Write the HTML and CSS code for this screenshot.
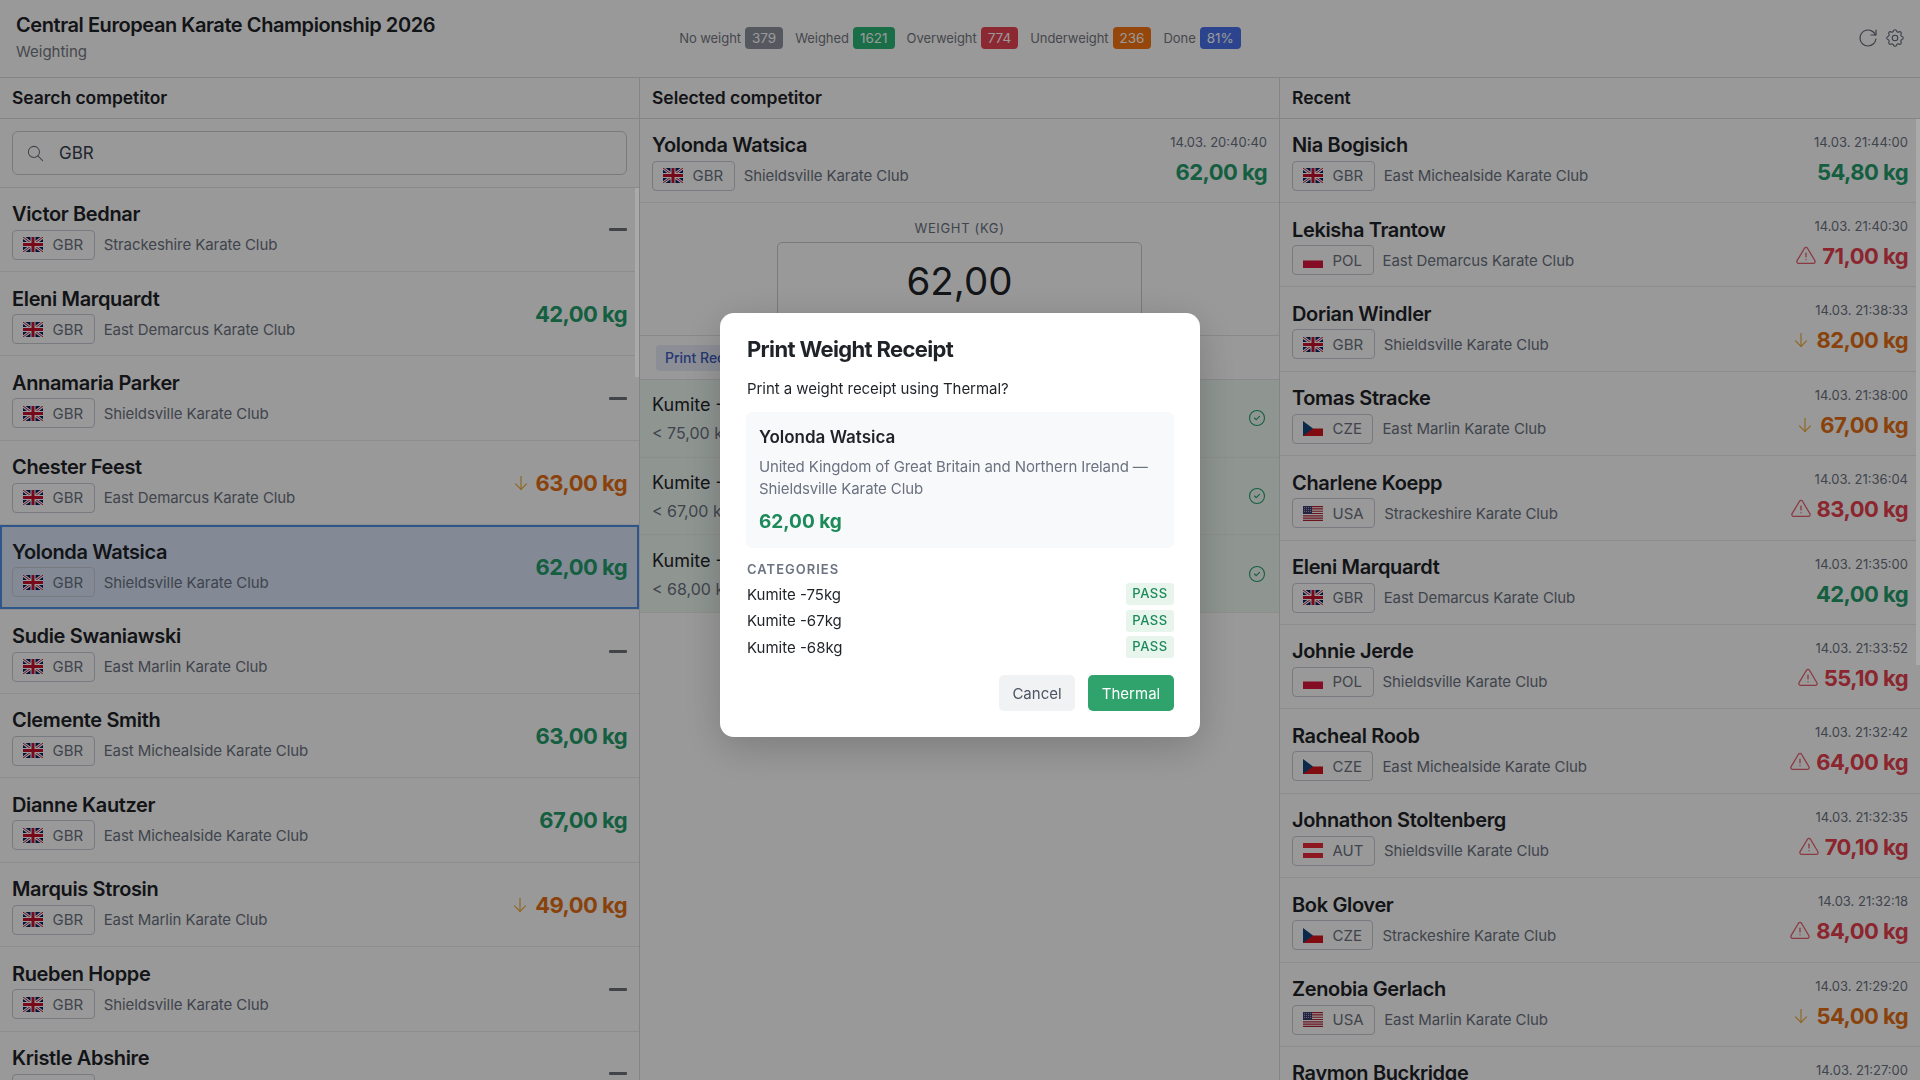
FILE: index.html
```html
<!DOCTYPE html>
<html lang="en">
<head>
<meta charset="utf-8">
<title>Weighting</title>
<link rel="stylesheet" href="styles.css">
</head>
<body>
<svg class="sprite" aria-hidden="true">
  <symbol id="gbr" viewBox="0 0 60 45" preserveAspectRatio="none">
    <rect width="60" height="45" fill="#012169"/>
    <path d="M0 0L60 45M60 0L0 45" stroke="#fff" stroke-width="9"/>
    <path d="M0 0L60 45M60 0L0 45" stroke="#c8102e" stroke-width="3"/>
    <path d="M30 0V45M0 22.500H60" stroke="#fff" stroke-width="15"/>
    <path d="M30 0V45M0 22.500H60" stroke="#c8102e" stroke-width="9"/>
  </symbol>
  <symbol id="pol" viewBox="0 0 20 15" preserveAspectRatio="none">
    <rect width="20" height="7.500" fill="#fff"/>
    <rect y="7.500" width="20" height="7.500" fill="#dc143c"/>
  </symbol>
  <symbol id="cze" viewBox="0 0 20 15" preserveAspectRatio="none">
    <rect width="20" height="7.500" fill="#fff"/>
    <rect y="7.500" width="20" height="7.500" fill="#d7141a"/>
    <path d="M0 0L10 7.500L0 15Z" fill="#11457e"/>
  </symbol>
  <symbol id="usa" viewBox="0 0 20 15" preserveAspectRatio="none">
    <rect width="20" height="15" fill="#fff"/>
    <path d="M0 .6H20M0 2.900H20M0 5.200H20M0 7.500H20M0 9.800H20M0 12.100H20M0 14.400H20" stroke="#b22234" stroke-width="1.150"/>
    <rect width="9" height="8" fill="#3c3b6e"/>
    <path d="M1 1.500H8M1 3.500H8M1 5.500H8" stroke="#cfd0e0" stroke-width=".7" stroke-dasharray="1 1"/>
  </symbol>
  <symbol id="aut" viewBox="0 0 20 15" preserveAspectRatio="none">
    <rect width="20" height="15" fill="#ed2939"/>
    <rect y="5" width="20" height="5" fill="#fff"/>
  </symbol>
  <symbol id="i-warn" viewBox="0 0 24 24"><path d="M12 9v4"/><path d="M10.363 3.591l-8.106 13.534a1.914 1.914 0 0 0 1.636 2.871h16.214a1.914 1.914 0 0 0 1.636 -2.87l-8.106 -13.536a1.914 1.914 0 0 0 -3.274 0z"/><path d="M12 16h.01"/></symbol>
  <symbol id="i-down" viewBox="0 0 24 24"><path d="M12 5v14"/><path d="M18 13l-6 6"/><path d="M6 13l6 6"/></symbol>
  <symbol id="i-check" viewBox="0 0 24 24"><path d="M12 3a9 9 0 1 0 0 18a9 9 0 0 0 0 -18"/><path d="M9 12l2 2l4 -4"/></symbol>
</svg>

<div class="app">
  <header class="topbar">
    <div class="brand">
      <div class="brand-title">Central European Karate Championship 2026</div>
      <div class="brand-sub">Weighting</div>
    </div>
    <div class="stats">
      <span class="stat">No weight <b class="pill pill-gray">379</b></span>
      <span class="stat">Weighed <b class="pill pill-green">1621</b></span>
      <span class="stat">Overweight <b class="pill pill-red">774</b></span>
      <span class="stat">Underweight <b class="pill pill-orange">236</b></span>
      <span class="stat">Done <b class="pill pill-blue">81%</b></span>
    </div>
    <div class="tools">
      <svg class="tool tool-reload" viewBox="0 0 24 24"><path d="M19.933 13.041a8 8 0 1 1 -9.925 -8.788c3.899 -1 7.935 1.007 9.425 4.747"/><path d="M20 4v5h-5"/></svg>
      <svg class="tool tool-gear" viewBox="0 0 24 24"><path d="M10.325 4.317c.426 -1.756 2.924 -1.756 3.35 0a1.724 1.724 0 0 0 2.573 1.066c1.543 -.94 3.31 .826 2.37 2.37a1.724 1.724 0 0 0 1.065 2.572c1.756 .426 1.756 2.924 0 3.35a1.724 1.724 0 0 0 -1.066 2.573c.94 1.543 -.826 3.31 -2.37 2.37a1.724 1.724 0 0 0 -2.572 1.065c-.426 1.756 -2.924 1.756 -3.35 0a1.724 1.724 0 0 0 -2.573 -1.066c-1.543 .94 -3.31 -.826 -2.37 -2.37a1.724 1.724 0 0 0 -1.065 -2.572c-1.756 -.426 -1.756 -2.924 0 -3.35a1.724 1.724 0 0 0 1.066 -2.573c-.94 -1.543 .826 -3.31 2.37 -2.37c1 .608 2.296 .07 2.572 -1.065z"/><path d="M9 12a3 3 0 1 0 6 0a3 3 0 0 0 -6 0"/></svg>
    </div>
  </header>

  <main class="columns">
    <section class="col">
      <h2 class="col-head">Search competitor</h2>
      <div class="search-wrap">
        <div class="search">
          <svg class="search-icon" viewBox="0 0 24 24"><path d="M3 10a7 7 0 1 0 14 0a7 7 0 1 0 -14 0"/><path d="M21 21l-6 -6"/></svg>
          <span class="search-value">GBR</span>
        </div>
      </div>
      <div class="list">
        <div class="thumb thumb-left"></div>
        <div class="row"><div class="who"><div class="name">Victor Bednar</div><div class="sub"><span class="tag"><svg class="flag"><use href="#gbr"/></svg>GBR</span><span class="club">Strackeshire Karate Club</span></div></div><div class="dash"></div></div>
        <div class="row"><div class="who"><div class="name">Eleni Marquardt</div><div class="sub"><span class="tag"><svg class="flag"><use href="#gbr"/></svg>GBR</span><span class="club">East Demarcus Karate Club</span></div></div><div class="kg ok">42,00 kg</div></div>
        <div class="row"><div class="who"><div class="name">Annamaria Parker</div><div class="sub"><span class="tag"><svg class="flag"><use href="#gbr"/></svg>GBR</span><span class="club">Shieldsville Karate Club</span></div></div><div class="dash"></div></div>
        <div class="row"><div class="who"><div class="name">Chester Feest</div><div class="sub"><span class="tag"><svg class="flag"><use href="#gbr"/></svg>GBR</span><span class="club">East Demarcus Karate Club</span></div></div><div class="kg under"><svg class="ico ico-down"><use href="#i-down"/></svg>63,00 kg</div></div>
        <div class="row row-selected"><div class="who"><div class="name">Yolonda Watsica</div><div class="sub"><span class="tag"><svg class="flag"><use href="#gbr"/></svg>GBR</span><span class="club">Shieldsville Karate Club</span></div></div><div class="kg ok">62,00 kg</div></div>
        <div class="row"><div class="who"><div class="name">Sudie Swaniawski</div><div class="sub"><span class="tag"><svg class="flag"><use href="#gbr"/></svg>GBR</span><span class="club">East Marlin Karate Club</span></div></div><div class="dash"></div></div>
        <div class="row"><div class="who"><div class="name">Clemente Smith</div><div class="sub"><span class="tag"><svg class="flag"><use href="#gbr"/></svg>GBR</span><span class="club">East Michealside Karate Club</span></div></div><div class="kg ok">63,00 kg</div></div>
        <div class="row"><div class="who"><div class="name">Dianne Kautzer</div><div class="sub"><span class="tag"><svg class="flag"><use href="#gbr"/></svg>GBR</span><span class="club">East Michealside Karate Club</span></div></div><div class="kg ok">67,00 kg</div></div>
        <div class="row"><div class="who"><div class="name">Marquis Strosin</div><div class="sub"><span class="tag"><svg class="flag"><use href="#gbr"/></svg>GBR</span><span class="club">East Marlin Karate Club</span></div></div><div class="kg under"><svg class="ico ico-down"><use href="#i-down"/></svg>49,00 kg</div></div>
        <div class="row"><div class="who"><div class="name">Rueben Hoppe</div><div class="sub"><span class="tag"><svg class="flag"><use href="#gbr"/></svg>GBR</span><span class="club">Shieldsville Karate Club</span></div></div><div class="dash"></div></div>
        <div class="row"><div class="who"><div class="name">Kristle Abshire</div><div class="sub"><span class="tag"><svg class="flag"><use href="#gbr"/></svg>GBR</span><span class="club">East Marlin Karate Club</span></div></div><div class="dash"></div></div>
      </div>
    </section>

    <section class="col">
      <h2 class="col-head">Selected competitor</h2>
      <div class="row"><div class="who"><div class="name">Yolonda Watsica</div><div class="sub"><span class="tag"><svg class="flag"><use href="#gbr"/></svg>GBR</span><span class="club">Shieldsville Karate Club</span></div></div><div class="meta"><div class="time">14.03. 20:40:40</div><div class="kg ok">62,00 kg</div></div></div>
      <div class="weigh">
        <div class="weigh-label">WEIGHT (KG)</div>
        <div class="weigh-box">62,00</div>
      </div>
      <div class="actions"><span class="print-btn">Print Receipt</span></div>
      <div class="cat"><div><div class="cat-name">Kumite -75kg</div><div class="cat-limit">&lt; 75,00 kg</div></div><svg class="ico-check"><use href="#i-check"/></svg></div>
      <div class="cat"><div><div class="cat-name">Kumite -67kg</div><div class="cat-limit">&lt; 67,00 kg</div></div><svg class="ico-check"><use href="#i-check"/></svg></div>
      <div class="cat"><div><div class="cat-name">Kumite -68kg</div><div class="cat-limit">&lt; 68,00 kg</div></div><svg class="ico-check"><use href="#i-check"/></svg></div>
    </section>

    <section class="col col-last">
      <h2 class="col-head">Recent</h2>
      <div class="list">
        <div class="thumb thumb-right"></div>
        <div class="row"><div class="who"><div class="name">Nia Bogisich</div><div class="sub"><span class="tag"><svg class="flag"><use href="#gbr"/></svg>GBR</span><span class="club">East Michealside Karate Club</span></div></div><div class="meta"><div class="time">14.03. 21:44:00</div><div class="kg ok">54,80 kg</div></div></div>
        <div class="row"><div class="who"><div class="name">Lekisha Trantow</div><div class="sub"><span class="tag"><svg class="flag"><use href="#pol"/></svg>POL</span><span class="club">East Demarcus Karate Club</span></div></div><div class="meta"><div class="time">14.03. 21:40:30</div><div class="kg over"><svg class="ico ico-warn"><use href="#i-warn"/></svg>71,00 kg</div></div></div>
        <div class="row"><div class="who"><div class="name">Dorian Windler</div><div class="sub"><span class="tag"><svg class="flag"><use href="#gbr"/></svg>GBR</span><span class="club">Shieldsville Karate Club</span></div></div><div class="meta"><div class="time">14.03. 21:38:33</div><div class="kg under"><svg class="ico ico-down"><use href="#i-down"/></svg>82,00 kg</div></div></div>
        <div class="row"><div class="who"><div class="name">Tomas Stracke</div><div class="sub"><span class="tag"><svg class="flag"><use href="#cze"/></svg>CZE</span><span class="club">East Marlin Karate Club</span></div></div><div class="meta"><div class="time">14.03. 21:38:00</div><div class="kg under"><svg class="ico ico-down"><use href="#i-down"/></svg>67,00 kg</div></div></div>
        <div class="row"><div class="who"><div class="name">Charlene Koepp</div><div class="sub"><span class="tag"><svg class="flag"><use href="#usa"/></svg>USA</span><span class="club">Strackeshire Karate Club</span></div></div><div class="meta"><div class="time">14.03. 21:36:04</div><div class="kg over"><svg class="ico ico-warn"><use href="#i-warn"/></svg>83,00 kg</div></div></div>
        <div class="row"><div class="who"><div class="name">Eleni Marquardt</div><div class="sub"><span class="tag"><svg class="flag"><use href="#gbr"/></svg>GBR</span><span class="club">East Demarcus Karate Club</span></div></div><div class="meta"><div class="time">14.03. 21:35:00</div><div class="kg ok">42,00 kg</div></div></div>
        <div class="row"><div class="who"><div class="name">Johnie Jerde</div><div class="sub"><span class="tag"><svg class="flag"><use href="#pol"/></svg>POL</span><span class="club">Shieldsville Karate Club</span></div></div><div class="meta"><div class="time">14.03. 21:33:52</div><div class="kg over"><svg class="ico ico-warn"><use href="#i-warn"/></svg>55,10 kg</div></div></div>
        <div class="row"><div class="who"><div class="name">Racheal Roob</div><div class="sub"><span class="tag"><svg class="flag"><use href="#cze"/></svg>CZE</span><span class="club">East Michealside Karate Club</span></div></div><div class="meta"><div class="time">14.03. 21:32:42</div><div class="kg over"><svg class="ico ico-warn"><use href="#i-warn"/></svg>64,00 kg</div></div></div>
        <div class="row"><div class="who"><div class="name">Johnathon Stoltenberg</div><div class="sub"><span class="tag"><svg class="flag"><use href="#aut"/></svg>AUT</span><span class="club">Shieldsville Karate Club</span></div></div><div class="meta"><div class="time">14.03. 21:32:35</div><div class="kg over"><svg class="ico ico-warn"><use href="#i-warn"/></svg>70,10 kg</div></div></div>
        <div class="row"><div class="who"><div class="name">Bok Glover</div><div class="sub"><span class="tag"><svg class="flag"><use href="#cze"/></svg>CZE</span><span class="club">Strackeshire Karate Club</span></div></div><div class="meta"><div class="time">14.03. 21:32:18</div><div class="kg over"><svg class="ico ico-warn"><use href="#i-warn"/></svg>84,00 kg</div></div></div>
        <div class="row"><div class="who"><div class="name">Zenobia Gerlach</div><div class="sub"><span class="tag"><svg class="flag"><use href="#usa"/></svg>USA</span><span class="club">East Marlin Karate Club</span></div></div><div class="meta"><div class="time">14.03. 21:29:20</div><div class="kg under"><svg class="ico ico-down"><use href="#i-down"/></svg>54,00 kg</div></div></div>
        <div class="row"><div class="who"><div class="name">Raymon Buckridge</div><div class="sub"><span class="tag"><svg class="flag"><use href="#gbr"/></svg>GBR</span><span class="club">East Marlin Karate Club</span></div></div><div class="meta"><div class="time">14.03. 21:27:00</div><div class="kg ok">60,00 kg</div></div></div>
      </div>
    </section>
  </main>
</div>

<div class="overlay">
  <div class="modal">
    <h1 class="modal-title">Print Weight Receipt</h1>
    <p class="modal-text">Print a weight receipt using Thermal?</p>
    <div class="card">
      <div class="card-name">Yolonda Watsica</div>
      <div class="card-desc">United Kingdom of Great Britain and Northern Ireland — Shieldsville Karate Club</div>
      <div class="card-kg">62,00 kg</div>
    </div>
    <div class="section-label">CATEGORIES</div>
    <div class="pass-rows">
      <div class="pass-row"><span>Kumite -75kg</span><span class="pass">PASS</span></div>
      <div class="pass-row"><span>Kumite -67kg</span><span class="pass">PASS</span></div>
      <div class="pass-row"><span>Kumite -68kg</span><span class="pass">PASS</span></div>
    </div>
    <div class="modal-actions">
      <span class="btn btn-cancel">Cancel</span>
      <span class="btn btn-primary">Thermal</span>
    </div>
  </div>
</div>
</body>
</html>
```
FILE: styles.css
```css
* { box-sizing: border-box; }
html, body { margin: 0; height: 100%; overflow: hidden; }
body { font-family: Inter, "Noto Sans", sans-serif; color: #1f2328; background: #fff; font-size: 14px; }
.sprite { display: none; }

.app { height: 100vh; display: flex; flex-direction: column; overflow: hidden; }

.topbar { height: 78px; flex: none; display: grid; grid-template-columns: 1fr auto 1fr; align-items: center; padding: 0 16px; border-bottom: 1px solid #d9dce1; }
.brand { align-self: start; padding-top: 10px; }
.brand-title { font-size: 20px; line-height: 30px; font-weight: 600; letter-spacing: -.43px; }
.brand-sub { font-size: 15px; line-height: 23px; color: #757882; }
.stats { display: flex; gap: 12px; margin-top: -1px; }
.stat { display: flex; align-items: center; gap: 4px; font-size: 13px; letter-spacing: -.05px; color: #757882; }
.pill { display: block; height: 22px; line-height: 22px; padding: 0 7px; border-radius: 4px; font-weight: 400; color: #fff; font-size: 13.500px; letter-spacing: 0; }
.pill-gray { background: #8f93a0; }
.pill-green { background: #2bb778; }
.pill-red { background: #e94353; }
.pill-orange { background: #f97511; }
.pill-blue { background: #4a72ec; }
.tools { justify-self: end; display: flex; align-items: center; gap: 4px; margin: -1px -2px 0 0; }
.tool { fill: none; stroke: #616774; stroke-width: 1.200; stroke-linecap: round; stroke-linejoin: round; }
.tool-reload { width: 24px; height: 24px; }
.tool-gear { width: 22px; height: 22px; }

.columns { flex: 1; min-height: 0; display: grid; grid-template-columns: repeat(3, 1fr); }
.col { min-width: 0; display: flex; flex-direction: column; border-right: 1px solid #d9dce1; overflow: hidden; }
.col-last { border-right: 0; }
.col-head { margin: 0; flex: none; height: 40.700px; padding: 0 12px; font-size: 17.500px; line-height: 40px; font-weight: 600; letter-spacing: -.05px; border-bottom: 1px solid #d9dce1; }

.search-wrap { flex: none; height: 69px; padding: 12.500px 12px; border-bottom: 1px solid #e3e5e9; }
.search { height: 44px; display: flex; align-items: center; gap: 14px; padding: 0 13px; border: 1px solid #c9ccd2; border-radius: 6px; }
.search-icon { width: 19px; height: 19px; flex: none; fill: none; stroke: #6b7280; stroke-width: 1.300; stroke-linecap: round; stroke-linejoin: round; }
.search-value { font-size: 17px; color: #374151; }

.list { position: relative; flex: 1; min-height: 0; overflow: hidden; }
.thumb { position: absolute; right: 0; width: 4px; background: #aaa; z-index: 2; }
.thumb-left { top: 0; height: 189px; }
.thumb-right { top: 0; height: 546px; }

.row { height: 84.400px; flex: none; display: flex; justify-content: space-between; align-items: center; padding: 0 12px; border-bottom: 1px solid #e9ebee; }
.row-selected { background: #dae6fb; box-shadow: inset 0 0 0 2px #4f8fe6; }
.who { min-width: 0; margin-top: 2px; }
.name { font-size: 20px; line-height: 27px; font-weight: 600; letter-spacing: -.35px; margin-bottom: 1.500px; white-space: nowrap; }
.sub { display: flex; align-items: center; gap: 9px; }
.tag { display: inline-flex; align-items: center; gap: 9.500px; height: 30px; padding: 0 10.500px 0 10px; border: 1px solid #c9ccd6; border-radius: 4px; font-size: 15px; color: #6b7280; }
.flag { width: 20px; height: 15px; flex: none; }
.club { font-size: 15px; letter-spacing: -.08px; color: #6b7280; white-space: nowrap; }
.dash { width: 18px; height: 3px; margin-top: 1px; border-radius: 1px; background: #6e727c; }

.meta { display: flex; flex-direction: column; align-items: flex-end; gap: 1px; align-self: flex-start; padding-top: 13px; }
.time { font-size: 13px; line-height: 21px; color: #6b7280; }
.kg { display: flex; align-items: center; gap: 6px; font-size: 22px; line-height: 36px; font-weight: 700; letter-spacing: -.55px; white-space: nowrap; }
.ok { color: #239e6c; }
.over { color: #e8404f; }
.under { color: #e56f14; }
.ico { fill: none; stroke-linecap: round; stroke-linejoin: round; flex: none; }
.ico-warn { width: 22px; height: 22px; margin-right: -1px; stroke: #e8606e; stroke-width: 1.400; }
.ico-down { width: 22px; height: 22px; margin-right: -2px; stroke: #eeab3c; stroke-width: 1.300; }

.weigh { height: 132.500px; flex: none; padding-top: 14.500px; display: flex; flex-direction: column; align-items: center; border-bottom: 1px solid #e3e5e9; }
.weigh-label { font-size: 13px; line-height: 20px; letter-spacing: .65px; color: #6b7280; margin-bottom: 4px; }
.weigh-box { width: 365px; height: 80px; border: 1px solid #c9ccd2; border-radius: 5px; text-align: center; font-size: 38.500px; line-height: 76px; color: #1f2328; }

.actions { height: 44.500px; flex: none; padding: 9px 16px 0; border-bottom: 1px solid #e3e5e9; }
.print-btn { display: inline-block; height: 26px; line-height: 26px; padding: 0 9px; border-radius: 4px; background: #e8edf8; color: #3f5bc0; font-weight: 500; font-size: 14px; }

.cat { height: 77.600px; flex: none; display: flex; justify-content: space-between; align-items: center; padding: 0 12px; background: #eef8f2; border-bottom: 1px solid #e6efe9; }
.cat-name { font-size: 18px; line-height: 27px; }
.cat-limit { font-size: 16px; line-height: 24px; color: #6b7280; margin-top: 3px; }
.ico-check { width: 20px; height: 20px; fill: none; stroke: #239e6c; stroke-width: 1.300; stroke-linecap: round; stroke-linejoin: round; }

.overlay { position: fixed; inset: 0; background: rgba(0, 0, 0, .4); display: flex; justify-content: center; align-items: flex-start; padding-top: 313px; }
.modal { width: 480px; height: 424px; background: #fff; border-radius: 14px; padding: 20px 26px 26px 27px; box-shadow: 0 10px 40px rgba(0, 0, 0, .2); display: flex; flex-direction: column; }
.modal-title { margin: 0; font-size: 22px; line-height: 33px; font-weight: 700; letter-spacing: -.65px; }
.modal-text { margin: 11px 0 0; font-size: 15px; line-height: 23px; letter-spacing: -.05px; }
.card { margin: 12px 0 0 -1px; height: 136px; padding: 13px 12px 13px 13px; background: #f8f9fb; border-radius: 6px; }
.card-name { font-size: 17px; line-height: 25px; font-weight: 600; }
.card-desc { margin-top: 6px; font-size: 15px; line-height: 22px; letter-spacing: -.12px; color: #6b7280; }
.card-kg { margin-top: 7px; font-size: 19px; line-height: 30px; font-weight: 700; color: #1d8a5a; }
.section-label { margin-top: 12px; font-size: 13px; line-height: 19px; font-weight: 600; letter-spacing: 1px; color: #6b7280; }
.pass-rows { margin-top: 2px; }
.pass-row { display: flex; justify-content: space-between; align-items: center; height: 26.500px; font-size: 15px; }
.pass { width: 48px; height: 22px; line-height: 21px; text-align: center; background: #e7f5ec; color: #1d8a5a; border-radius: 3px; font-size: 13px; font-weight: 500; letter-spacing: .5px; }
.modal-actions { margin-top: auto; display: flex; justify-content: flex-end; gap: 13px; }
.btn { height: 36px; line-height: 37px; border-radius: 5px; font-size: 15px; text-align: center; }
.btn-cancel { width: 76px; background: #f1f2f4; color: #4b5563; }
.btn-primary { width: 86px; background: #2fa36b; color: #fff; }
```
